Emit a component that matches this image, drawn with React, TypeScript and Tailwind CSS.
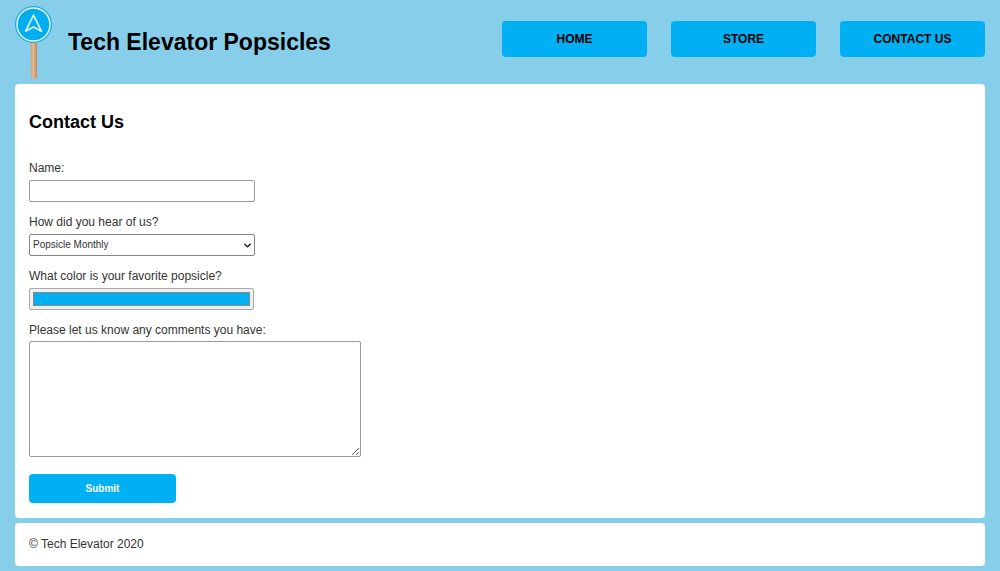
import { ChevronDown } from "lucide-react";

const links = ["HOME", "STORE", "CONTACT US"];

function Logo() {
  return (
    <svg width="38" height="76" viewBox="0 0 38 76" role="img" aria-label="Popsicle logo">
      <defs>
        <linearGradient id="stick" x1="0" x2="1" y1="0" y2="0">
          <stop offset="0" stopColor="#c99b72" />
          <stop offset="0.35" stopColor="#e6b78d" />
          <stop offset="0.7" stopColor="#dba679" />
          <stop offset="1" stopColor="#bd8659" />
        </linearGradient>
      </defs>
      <path d="M15.5 34H22v36q0 3-3 3t-3-3Z" fill="url(#stick)" />
      <circle cx="18.5" cy="18.5" r="18.5" fill="#15a9e9" />
      <circle cx="18.5" cy="18.5" r="16.5" fill="#00aeef" stroke="#e8f7fd" strokeWidth="1.5" />
      <path d="M18.5 9.2 26.4 25.2 18.5 21 10.6 25.2Z" fill="none" stroke="#d9f3fd" strokeWidth="1.7" strokeLinejoin="round" />
    </svg>
  );
}

export default function App() {
  return (
    <div className="flex min-h-screen flex-col bg-[#87ceeb] px-[15px] pb-[5px] font-['Liberation_Sans',Arial,sans-serif] text-[12px] leading-4 text-[#333]">
      <header className="flex min-h-21 items-start justify-between">
        <div className="flex items-start gap-[15px] pt-[6px]">
          <Logo />
          <h1 className="pt-5 text-[23px] leading-8 font-bold whitespace-nowrap text-black">Tech Elevator Popsicles</h1>
        </div>
        <nav className="flex gap-6 pt-[21px]">
          {links.map((link) => (
            <a key={link} href="#" className="flex h-9 w-[145px] items-center justify-center rounded bg-[#00b0f3] font-bold text-black">
              {link}
            </a>
          ))}
        </nav>
      </header>

      <main className="rounded bg-white px-[14px] pt-[26px] pb-[15px]">
        <h2 className="text-[18px] leading-6 font-bold text-black">Contact Us</h2>
        <form className="mt-[26px] flex flex-col items-start gap-3" onSubmit={(event) => event.preventDefault()}>
          <div className="flex flex-col items-start gap-1">
            <label htmlFor="name">Name:</label>
            <input id="name" type="text" className="h-[22px] w-[226px] rounded-xs border border-[#999] bg-white px-1 text-[10px]" />
          </div>
          <div className="flex flex-col items-start gap-1">
            <label htmlFor="source">How did you hear of us?</label>
            <div className="relative">
              <select id="source" className="block h-[22px] w-[226px] appearance-none rounded-xs border border-[#858585] bg-white pr-4 pl-[3px] text-[10px]">
                <option>Popsicle Monthly</option>
              </select>
              <ChevronDown size={11} strokeWidth={3} className="pointer-events-none absolute top-[6px] right-[2px] text-black" />
            </div>
          </div>
          <div className="flex flex-col items-start gap-1">
            <label htmlFor="color">What color is your favorite popsicle?</label>
            <input
              id="color"
              type="color"
              defaultValue="#00b0f3"
              className="h-[22px] w-[225px] rounded-xs border border-[#a9a9a9] bg-[#efefef] px-[3px] py-[3px] [&::-webkit-color-swatch]:border [&::-webkit-color-swatch]:border-solid [&::-webkit-color-swatch]:border-[#888] [&::-webkit-color-swatch-wrapper]:p-0"
            />
          </div>
          <div className="flex flex-col items-start gap-[3px]">
            <label htmlFor="comments">Please let us know any comments you have:</label>
            <textarea id="comments" className="h-[116px] w-[332px] resize rounded-xs border border-[#999] bg-white p-1 text-[10px]" />
          </div>
          <button type="submit" className="mt-[5px] h-[29px] w-[147px] rounded bg-[#00b0f3] text-[10px] font-bold text-white">
            Submit
          </button>
        </form>
      </main>

      <footer className="mt-[5px] rounded bg-white px-[14px] pt-[13px] pb-[14px]">© Tech Elevator 2020</footer>
    </div>
  );
}
